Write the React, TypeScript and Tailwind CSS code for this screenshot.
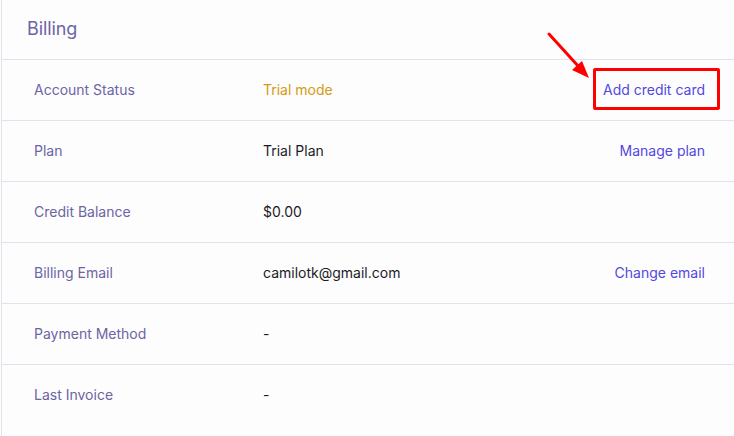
import React from 'react';

type Row = {
  label: string;
  value: string;
  valueClass?: string;
  action?: string;
};

const rows: Row[] = [
  { label: 'Account Status', value: 'Trial mode', valueClass: 'text-[#d49a12]', action: 'Add credit card' },
  { label: 'Plan', value: 'Trial Plan', action: 'Manage plan' },
  { label: 'Credit Balance', value: '$0.00' },
  { label: 'Billing Email', value: 'camilotk@gmail.com', action: 'Change email' },
  { label: 'Payment Method', value: '-' },
  { label: 'Last Invoice', value: '-' },
];

const App: React.FC = () => {
  return (
    <div className="relative w-[734px] h-[436px] overflow-hidden bg-[#fdfdfe] font-['Inter','Liberation_Sans',sans-serif]">
      <div className="ml-px h-full border-l border-[#e3e1ee]">
        <div className="h-[60px] border-b border-[#e3e1ee] flex items-center pl-[25px] pb-[3px]">
          <h2 className="text-[18px] text-[#6c64a3] tracking-[-0.1px]">Billing</h2>
        </div>
        {rows.map((row, i) => (
          <div
            key={row.label}
            className={`h-[61px] flex items-center text-[14px] pb-[2px] ${i < rows.length - 1 ? 'border-b border-[#e3e1ee]' : ''}`}
          >
            <div className="w-[261px] pl-[32px] text-[#6c64a3]">{row.label}</div>
            <div className={`flex-1 ${row.valueClass ?? 'text-[#1c1b26]'}`}>{row.value}</div>
            {row.action && (
              <button className="mr-[29px] text-[#5248e0]">{row.action}</button>
            )}
          </div>
        ))}
      </div>

      {/* annotation: red box + arrow */}
      <div className="absolute left-[593px] top-[68px] w-[127px] h-[42px] border-[3px] border-[#ff0000] rounded-[2px]" />
      <svg className="absolute left-0 top-0" width="734" height="436" viewBox="0 0 734 436">
        <line x1="549" y1="34" x2="579" y2="67" stroke="#ff0000" strokeWidth="3" strokeLinecap="round" />
        <polygon points="589,78 572,70 582,61" fill="#ff0000" />
      </svg>
    </div>
  );
};

export default App;
